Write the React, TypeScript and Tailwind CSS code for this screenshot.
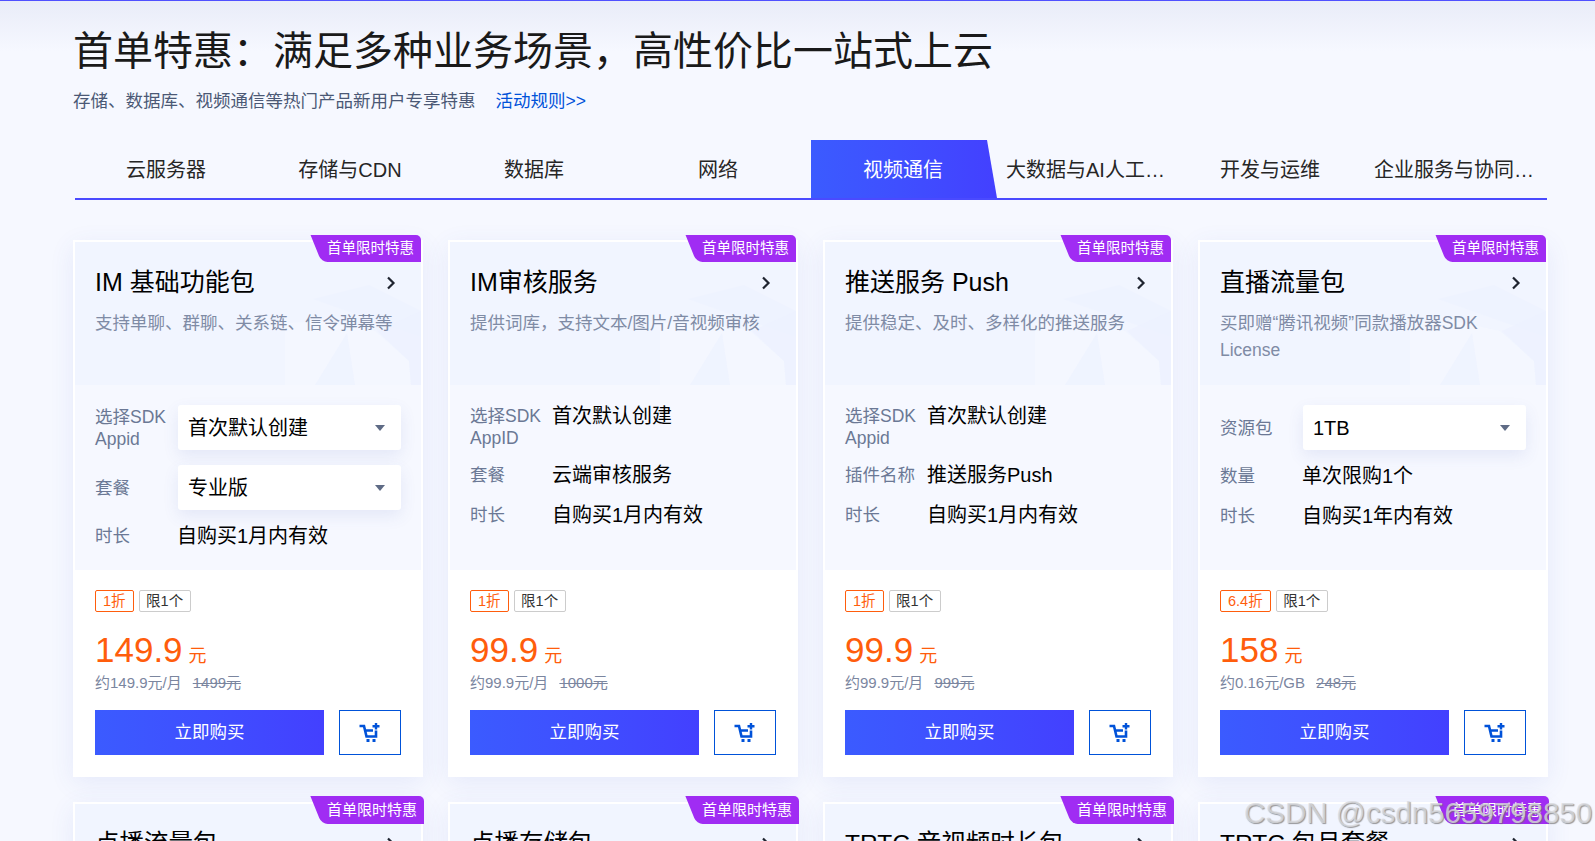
const FONT = "[font-family:'Liberation_Sans','Noto_Sans_CJK_SC',sans-serif]";

type Row = { label: string; value: string; select?: boolean };
type Card = {
  title: string;
  desc: string;
  rows: Row[];
  discount: string;
  price: string;
  monthly: string;
  original: string;
};

const tabs = ["云服务器", "存储与CDN", "数据库", "网络", "视频通信", "大数据与AI人工智能", "开发与运维", "企业服务与协同办公"];

const cards: Card[] = [
  {
    title: "IM 基础功能包",
    desc: "支持单聊、群聊、关系链、信令弹幕等",
    rows: [
      { label: "选择SDK Appid", value: "首次默认创建", select: true },
      { label: "套餐", value: "专业版", select: true },
      { label: "时长", value: "自购买1月内有效" },
    ],
    discount: "1折",
    price: "149.9",
    monthly: "约149.9元/月",
    original: "1499元",
  },
  {
    title: "IM审核服务",
    desc: "提供词库\uFF0C支持文本/图片/音视频审核",
    rows: [
      { label: "选择SDK AppID", value: "首次默认创建" },
      { label: "套餐", value: "云端审核服务" },
      { label: "时长", value: "自购买1月内有效" },
    ],
    discount: "1折",
    price: "99.9",
    monthly: "约99.9元/月",
    original: "1000元",
  },
  {
    title: "推送服务 Push",
    desc: "提供稳定、及时、多样化的推送服务",
    rows: [
      { label: "选择SDK Appid", value: "首次默认创建" },
      { label: "插件名称", value: "推送服务Push" },
      { label: "时长", value: "自购买1月内有效" },
    ],
    discount: "1折",
    price: "99.9",
    monthly: "约99.9元/月",
    original: "999元",
  },
  {
    title: "直播流量包",
    desc: "买即赠“腾讯视频”同款播放器SDK License",
    rows: [
      { label: "资源包", value: "1TB", select: true },
      { label: "数量", value: "单次限购1个" },
      { label: "时长", value: "自购买1年内有效" },
    ],
    discount: "6.4折",
    price: "158",
    monthly: "约0.16元/GB",
    original: "248元",
  },
];

const nextRow = ["点播流量包", "点播存储包", "TRTC 音视频时长包", "TRTC 包月套餐"];

function Badge({ big }: { big?: boolean }) {
  return (
    <div
      className={
        big
          ? "absolute top-[-8px] right-[-3px] h-[28px] w-[113px] flex items-center justify-end pr-[7px] text-[15px] text-white"
          : "absolute top-[-7px] right-0 h-[27px] w-[110px] flex items-center justify-end pr-[7px] text-[14.5px] text-white"
      }
    >
      <div className="absolute inset-y-0 left-0 w-[30px] skew-x-[22deg] origin-center rounded-bl-[6px] bg-[#a02cf3] translate-x-[5px]" />
      <div className="absolute inset-y-0 left-[20px] right-0 rounded-tr-[5px] bg-[#a02cf3]" />
      <span className="relative">首单限时特惠</span>
    </div>
  );
}

function Chevron() {
  return (
    <svg width="10" height="14" viewBox="0 0 10 14" fill="none" className="shrink-0 -mt-[1px]">
      <path d="M2 1.5 L7.5 7 L2 12.5" stroke="#1f2430" strokeWidth="2.2" />
    </svg>
  );
}

function Decor() {
  return (
    <svg width="136" height="100" viewBox="0 0 136 100" className="absolute right-0 bottom-0 pointer-events-none">
      <polygon points="28,14 84,0 136,26 136,52" fill="#ecf1ff" opacity="0.6" />
      <polygon points="0,38 44,36 90,46 124,76 126,100 0,100" fill="#f4f7ff" opacity="0.9" />
      <polygon points="30,100 62,48 70,100" fill="#edf2ff" opacity="0.8" />
      <polygon points="92,46 136,26 136,100 126,100 124,76" fill="#ecf1ff" opacity="0.7" />
    </svg>
  );
}

function CartPlus() {
  return (
    <svg width="22" height="20" viewBox="0 0 22 20" fill="none">
      <path d="M0.5 3 H5 L7.5 13.5 H17 V7.5 M6 7.5 H14" stroke="#0052d9" strokeWidth="2.6" />
      <path d="M17 0 V6.5 M13.5 3.2 H20.5" stroke="#0052d9" strokeWidth="2.4" />
      <rect x="7.5" y="16" width="3" height="3" fill="#0052d9" />
      <rect x="13.5" y="16" width="3" height="3" fill="#0052d9" />
    </svg>
  );
}

function SpecRow({ row }: { row: Row }) {
  const twoLine = row.label.includes(" ");
  if (row.select) {
    return (
      <div className="flex items-center mb-[15px]">
        <div className="w-[82px] mr-[1px] shrink-0 text-[17.5px] leading-[22px] text-[#6b7895]">{row.label}</div>
        <div className="flex-1 h-[45px] bg-white rounded-[3px] pl-[10px] pr-[16px] flex items-center justify-between text-[20px] text-black shadow-[0_6px_16px_rgba(70,90,180,0.1)]">
          <span>{row.value}</span>
          <span className="w-0 h-0 border-x-[5px] border-x-transparent border-t-[6px] border-t-[#5f6b85]" />
        </div>
      </div>
    );
  }
  return (
    <div className={twoLine ? "flex items-start mb-[15px]" : "flex items-start mb-[18px]"}>
      <div className="w-[82px] shrink-0 text-[17.5px] leading-[22px] text-[#6b7895]">{row.label}</div>
      <div className="text-[20px] leading-[22px] text-black">{row.value}</div>
    </div>
  );
}

function ProductCard({ card }: { card: Card }) {
  return (
    <div className="relative border-2 border-white bg-white shadow-[0_6px_24px_rgba(70,90,200,0.09)]">
      <div className="relative h-[143px] bg-[#f1f5ff] overflow-hidden px-[20px] pt-[25px]">
        <Decor />
        <div className="relative flex items-center justify-between pr-[5px] h-[32px]">
          <span className="text-[25px] text-black">{card.title}</span>
          <Chevron />
        </div>
        <p className="relative mt-[11px] text-[17.5px] leading-[27px] text-[#7f8ba5]">{card.desc}</p>
      </div>
      <Badge />
      <div className="h-[185px] bg-[#f6f8ff] px-[20px] pt-[20px]">
        {card.rows.map((r) => (
          <SpecRow key={r.label} row={r} />
        ))}
      </div>
      <div className="px-[20px] pt-[20px] pb-[20px]">
        <div className="flex gap-[5px] h-[22px]">
          <span className="px-[7px] rounded-[2px] border border-[#ff5d0c] text-[#ff5d0c] text-[14.5px] leading-[20px]">{card.discount}</span>
          <span className="px-[6.5px] rounded-[2px] border border-[#cccccc] text-[#333333] text-[14.5px] leading-[20px]">限1个</span>
        </div>
        <div className="mt-[18px] flex items-baseline h-[40px] text-[#ff5d0c]">
          <span className="text-[35px] leading-[40px]">{card.price}</span>
          <span className="ml-[6px] text-[18px]">元</span>
        </div>
        <div className="mt-[2px] h-[22px] flex items-center gap-[11px] text-[15px] text-[#7b869f]">
          <span>{card.monthly}</span>
          <span className="line-through">{card.original}</span>
        </div>
        <div className="mt-[16px] flex gap-[15px]">
          <button className="w-[229px] h-[45px] bg-linear-to-r from-[#3b5bff] to-[#4340ff] text-white text-[17.5px]">立即购买</button>
          <button className="w-[62px] h-[45px] border border-[#0052d9] flex items-center justify-center">
            <CartPlus />
          </button>
        </div>
      </div>
    </div>
  );
}

export default function App() {
  return (
    <div className={`${FONT} relative h-screen overflow-hidden bg-[#f6f8ff] border-t border-[#5050ff]`}>
      <div className="h-[50px] bg-linear-to-b from-[#e9ecf8] to-[#f6f8ff]" />
      <main className="-mt-[50px] relative pl-[73px] pr-[48px]">
        <h1 className="pt-[30px] text-[40px] leading-[40px] text-[#1a1a1a]">{"首单特惠\uFF1A满足多种业务场景\uFF0C高性价比一站式上云"}</h1>
        <div className="mt-[18px] h-[24px] flex items-center gap-[20px] text-[17.5px]">
          <span className="text-[#4b5875]">存储、数据库、视频通信等热门产品新用户专享特惠</span>
          <a className="text-[#0052d9]">活动规则&gt;&gt;</a>
        </div>

        {/* tabs */}
        <div className="mt-[27px] ml-[2px] flex h-[60px] border-b-2 border-[#4a4aff]">
          {tabs.map((t, i) => (
            <div
              key={t}
              className={
                i === 4
                  ? "w-[186px] -mr-[2px] shrink-0 flex items-center justify-center pt-[2px] pr-[2px] text-[20px] text-white bg-linear-to-r from-[#3b5bff] to-[#4340ff] [clip-path:polygon(0_0,176px_0,100%_100%,0_100%)]"
                  : "w-[184px] shrink-0 flex items-center justify-center pt-[2px] pr-[2px] text-[20px] text-[#262626]"
              }
            >
              <span className="block max-w-[160px] truncate">{t}</span>
            </div>
          ))}
        </div>

        {/* product cards */}
        <div className="mt-[40px] grid grid-cols-[repeat(4,350px)] gap-[25px]">
          {cards.map((c) => (
            <ProductCard key={c.title} card={c} />
          ))}
          {nextRow.map((t) => (
            <div key={t} className="relative h-[200px] border-2 border-white bg-[#f1f5ff] shadow-[0_6px_24px_rgba(70,90,200,0.09)]">
              <Badge big />
              <div className="px-[20px] pt-[24px] flex items-center justify-between pr-[25px] h-[56px]">
                <span className="text-[24.5px] text-black">{t}</span>
                <Chevron />
              </div>
            </div>
          ))}
        </div>
      </main>

      {/* watermark */}
      <div className="absolute left-[1244px] top-[795px] text-[29.5px] leading-[34px] whitespace-nowrap text-[#d9dade]/80 [text-shadow:1px_1px_1px_rgba(110,110,110,0.7)]">
        CSDN @csdn5659798850
      </div>
    </div>
  );
}
